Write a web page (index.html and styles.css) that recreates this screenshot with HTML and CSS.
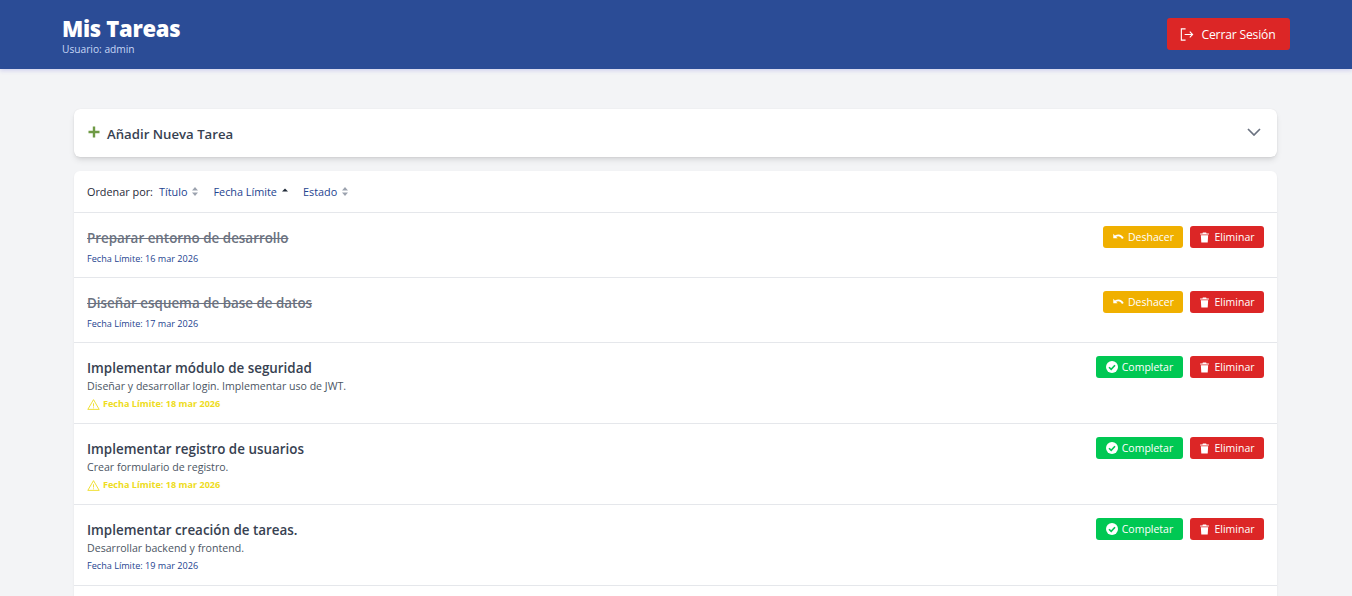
FILE: index.html
```html
<!DOCTYPE html>
<html lang="es">
<head>
  <meta charset="UTF-8" />
  <meta name="viewport" content="width=device-width, initial-scale=1.0"/>
  <title>Mis Tareas</title>
  <link rel="stylesheet" href="styles.css">
</head>
<body>
  <header class="cabecera">
    <div class="cabecera-info">
      <h1>Mis Tareas</h1>
      <p>Usuario: admin</p>
    </div>
    <button class="btn-salir">
      <svg class="icono-salir" viewBox="0 0 16 16" fill="none" stroke="currentColor" stroke-width="1.2">
        <path d="M7 2H2.5v12H7"/>
        <path d="M6 8h8.5M11.5 5l3 3-3 3"/>
      </svg>
      Cerrar Sesión
    </button>
  </header>

  <main class="contenido">
    <section class="nueva-tarea">
      <div class="nueva-titulo">
        <svg class="icono-mas" viewBox="0 0 12 12"><path d="M6 0.5v11M0.5 6h11" stroke="#6f9a45" stroke-width="2.4" fill="none"/></svg>
        <span>Añadir Nueva Tarea</span>
      </div>
      <svg class="icono-flecha" viewBox="0 0 14 8"><path d="M1 1l6 6 6-6" stroke="#6b7280" stroke-width="1.7" fill="none"/></svg>
    </section>

    <section class="lista">
      <div class="orden">
        <span class="orden-label">Ordenar por:</span>
        <span class="orden-item">Título
          <svg class="icono-orden" viewBox="0 0 6 9"><path d="M3 0l3 3.6H0zM3 9L0 5.4h6z" fill="#9ca3af"/></svg>
        </span>
        <span class="orden-item">Fecha Límite
          <svg class="icono-orden" viewBox="0 0 6 9"><path d="M3 1.4l3 3H0z" fill="#1f2937"/></svg>
        </span>
        <span class="orden-item">Estado
          <svg class="icono-orden" viewBox="0 0 6 9"><path d="M3 0l3 3.6H0zM3 9L0 5.4h6z" fill="#9ca3af"/></svg>
        </span>
      </div>

      <article class="tarea hecha">
        <div>
          <h3>Preparar entorno de desarrollo</h3>
          <p class="fecha">Fecha Límite: 16 mar 2026</p>
        </div>
        <div class="acciones">
          <button class="btn btn-deshacer">
            <svg class="icono-btn" viewBox="0 0 12 12"><path d="M0.3 2v4.800h4.800L3.300 5.200c2.500-1.300 5-.5 6.500 2.300l1.900-1C9.800 2.500 5.700 1.500 2 3.900z" fill="currentColor"/></svg>
            Deshacer
          </button>
          <button class="btn btn-eliminar">
            <svg class="icono-btn" viewBox="0 0 12 12"><path d="M4.200 0.500h3.600l.4 1h2.600v1.300H1.200V1.500h2.600zM2 3.600h8l-.5 7.900H2.500z" fill="currentColor"/></svg>
            Eliminar
          </button>
        </div>
      </article>

      <article class="tarea hecha">
        <div>
          <h3>Diseñar esquema de base de datos</h3>
          <p class="fecha">Fecha Límite: 17 mar 2026</p>
        </div>
        <div class="acciones">
          <button class="btn btn-deshacer">
            <svg class="icono-btn" viewBox="0 0 12 12"><path d="M0.3 2v4.800h4.800L3.300 5.200c2.500-1.300 5-.5 6.500 2.300l1.900-1C9.800 2.500 5.700 1.500 2 3.900z" fill="currentColor"/></svg>
            Deshacer
          </button>
          <button class="btn btn-eliminar">
            <svg class="icono-btn" viewBox="0 0 12 12"><path d="M4.200 0.500h3.600l.4 1h2.600v1.300H1.200V1.500h2.600zM2 3.600h8l-.5 7.900H2.500z" fill="currentColor"/></svg>
            Eliminar
          </button>
        </div>
      </article>

      <article class="tarea">
        <div>
          <h3>Implementar módulo de seguridad</h3>
          <p class="descripcion">Diseñar y desarrollar login. Implementar uso de JWT.</p>
          <p class="fecha aviso">
            <svg class="icono-aviso" viewBox="0 0 16 16" fill="none" stroke="currentColor" stroke-width="1.100"><path d="M8 2L1 14h14z" stroke-linejoin="round"/><path d="M8 6.500v4M8 11.500v1.200"/></svg>
            Fecha Límite: 18 mar 2026
          </p>
        </div>
        <div class="acciones">
          <button class="btn btn-completar">
            <svg class="icono-check" viewBox="0 0 12 12"><circle cx="6" cy="6" r="6" fill="currentColor"/><path d="M3 6.200l2.200 2.200L9 4.300" stroke="#00c853" stroke-width="1.600" fill="none"/></svg>
            Completar
          </button>
          <button class="btn btn-eliminar">
            <svg class="icono-btn" viewBox="0 0 12 12"><path d="M4.200 0.500h3.600l.4 1h2.600v1.300H1.200V1.500h2.600zM2 3.600h8l-.5 7.900H2.500z" fill="currentColor"/></svg>
            Eliminar
          </button>
        </div>
      </article>

      <article class="tarea">
        <div>
          <h3>Implementar registro de usuarios</h3>
          <p class="descripcion">Crear formulario de registro.</p>
          <p class="fecha aviso">
            <svg class="icono-aviso" viewBox="0 0 16 16" fill="none" stroke="currentColor" stroke-width="1.100"><path d="M8 2L1 14h14z" stroke-linejoin="round"/><path d="M8 6.500v4M8 11.500v1.200"/></svg>
            Fecha Límite: 18 mar 2026
          </p>
        </div>
        <div class="acciones">
          <button class="btn btn-completar">
            <svg class="icono-check" viewBox="0 0 12 12"><circle cx="6" cy="6" r="6" fill="currentColor"/><path d="M3 6.200l2.200 2.200L9 4.300" stroke="#00c853" stroke-width="1.600" fill="none"/></svg>
            Completar
          </button>
          <button class="btn btn-eliminar">
            <svg class="icono-btn" viewBox="0 0 12 12"><path d="M4.200 0.500h3.600l.4 1h2.600v1.300H1.200V1.500h2.600zM2 3.600h8l-.5 7.900H2.500z" fill="currentColor"/></svg>
            Eliminar
          </button>
        </div>
      </article>

      <article class="tarea">
        <div>
          <h3>Implementar creación de tareas.</h3>
          <p class="descripcion">Desarrollar backend y frontend.</p>
          <p class="fecha">Fecha Límite: 19 mar 2026</p>
        </div>
        <div class="acciones">
          <button class="btn btn-completar">
            <svg class="icono-check" viewBox="0 0 12 12"><circle cx="6" cy="6" r="6" fill="currentColor"/><path d="M3 6.200l2.200 2.200L9 4.300" stroke="#00c853" stroke-width="1.600" fill="none"/></svg>
            Completar
          </button>
          <button class="btn btn-eliminar">
            <svg class="icono-btn" viewBox="0 0 12 12"><path d="M4.200 0.500h3.600l.4 1h2.600v1.300H1.200V1.500h2.600zM2 3.600h8l-.5 7.900H2.500z" fill="currentColor"/></svg>
            Eliminar
          </button>
        </div>
      </article>
    </section>
  </main>
</body>
</html>
```

FILE: styles.css
```css
* {
  box-sizing: border-box;
}

html, body {
  height: 100%;
}

body {
  margin: 0;
  font-family: "Open Sans", "Noto Sans", sans-serif;
  background: #f3f4f6;
  color: #374151;
  overflow: hidden;
}

h1, h3, p {
  margin: 0;
}

button {
  font-family: inherit;
  border: none;
  cursor: pointer;
}

svg {
  display: block;
  flex-shrink: 0;
}

.cabecera {
  height: 69px;
  background: #2b4c96;
  box-shadow: 0 2px 4px rgba(90, 90, 210, 0.2);
  padding: 0 62px;
  display: flex;
  justify-content: space-between;
  align-items: center;
}

.cabecera-info {
  margin-top: 1px;
}

.cabecera h1 {
  font-size: 22px;
  line-height: 28px;
  font-weight: 800;
  letter-spacing: -0.3px;
  color: #fff;
}

.cabecera p {
  font-size: 10.2px;
  line-height: 14px;
  color: #c7d6f5;
}

.btn-salir {
  width: 123px;
  height: 32px;
  margin-top: -1px;
  padding: 1px 8px 0 6px;
  background: #dc2626;
  color: #fff;
  font-size: 12.2px;
  letter-spacing: -0.2px;
  border-radius: 3px;
  display: flex;
  align-items: center;
  justify-content: center;
  gap: 7px;
}

.icono-salir {
  width: 15px;
  height: 15px;
}

.contenido {
  padding: 40px 75px 0 74px;
}

.nueva-tarea {
  height: 48px;
  background: #fff;
  border-radius: 6px;
  box-shadow: 0 4px 6px -1px rgba(0, 0, 0, 0.1), 0 2px 4px -2px rgba(0, 0, 0, 0.1), 0 0 1px rgba(0, 0, 0, 0.12);
  padding: 0 16px 0 14px;
  display: flex;
  justify-content: space-between;
  align-items: center;
}

.nueva-titulo {
  display: flex;
  align-items: center;
  gap: 7px;
  font-size: 13.2px;
  font-weight: 600;
  color: #374151;
}

.nueva-titulo span {
  margin-top: 2px;
}

.icono-mas {
  width: 12px;
  height: 12px;
  margin-top: -2px;
}

.icono-flecha {
  width: 14px;
  height: 8px;
  margin-top: -2px;
}

.lista {
  margin-top: 14px;
  min-height: 430px;
  background: #fff;
  border-radius: 6px 6px 0 0;
  box-shadow: 0 1px 2px rgba(0, 0, 0, 0.08);
}

.orden {
  height: 42px;
  padding: 0 13px 1px;
  display: flex;
  align-items: center;
  gap: 6px;
  font-size: 10.85px;
  border-bottom: 1px solid #e5e7eb;
}

.orden-label {
  font-weight: 500;
  color: #1f2937;
}

.orden-item {
  display: flex;
  align-items: center;
  gap: 5px;
  margin-right: 9px;
  color: #24438f;
}

.icono-orden {
  width: 6px;
  height: 9px;
}

.tarea {
  padding: 15px 13px 11px;
  display: flex;
  justify-content: space-between;
  align-items: flex-start;
  border-bottom: 1px solid #e5e7eb;
}

.tarea h3 {
  font-size: 13.4px;
  line-height: 20px;
  font-weight: 600;
  color: #374151;
}

.tarea.hecha h3 {
  color: #6b7280;
  text-decoration: line-through;
}

.descripcion {
  margin-top: 1px;
  font-size: 10.6px;
  line-height: 14px;
  color: #4b5563;
}

.fecha {
  margin-top: 4px;
  font-size: 9.1px;
  line-height: 14px;
  color: #24438f;
}

.descripcion + .fecha {
  margin-bottom: 1px;
}

.aviso {
  display: flex;
  align-items: center;
  gap: 3px;
  font-weight: 700;
  color: #eedc21;
}

.icono-aviso {
  width: 13px;
  height: 13px;
}

.acciones {
  display: flex;
  gap: 7px;
  margin-top: -2px;
}

.btn {
  height: 22px;
  padding: 0;
  border-radius: 3px;
  color: #fff;
  font-size: 10.5px;
  display: flex;
  align-items: center;
  justify-content: center;
  gap: 4px;
}

.icono-btn {
  width: 11px;
  height: 11px;
}

.icono-check {
  width: 12px;
  height: 12px;
}

.btn-eliminar {
  width: 74px;
  background: #dc2626;
}

.btn-deshacer {
  width: 80px;
  padding-left: 1px;
  background: #f0b000;
}

.btn-completar {
  width: 87px;
  background: #00c853;
}
```
